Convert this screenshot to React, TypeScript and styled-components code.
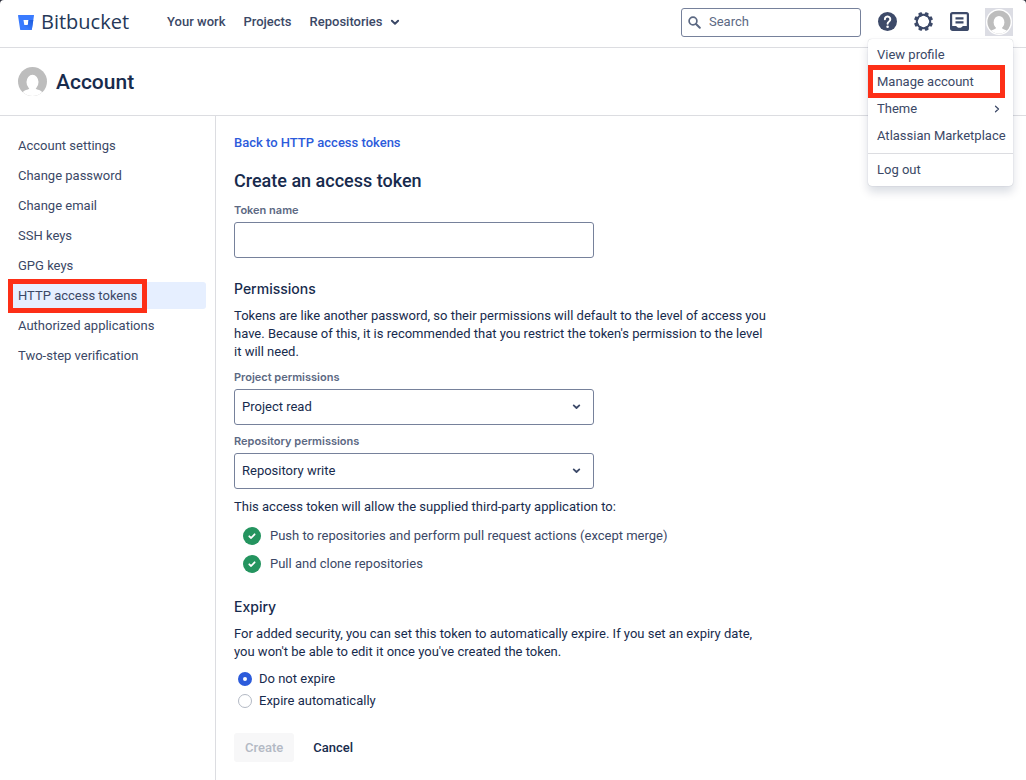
import React, { useState } from "react";
import styled, { createGlobalStyle, css } from "styled-components";

const color = {
  text: "#172b4d",
  nav: "#3b4866",
  label: "#5c6983",
  border: "#dcdde1",
  input: "#76819b",
  link: "#2c5bdb",
  icon: "#3d4a69",
  mark: "#fd2f17",
};

const GlobalStyle = createGlobalStyle`
  *, *::before, *::after { box-sizing: border-box; }
  body {
    margin: 0;
    background: #fff;
    color: ${color.text};
    font-family: Roboto, "Liberation Sans", sans-serif;
    font-size: 13px;
    line-height: 18px;
  }
  a { color: inherit; text-decoration: none; }
  button, input, select { font: inherit; color: inherit; }
`;

const Page = styled.div`
  display: flex;
  flex-direction: column;
  min-height: 100vh;
`;

const WindowTop = styled.div`
  background: #2a2c38;
`;

const TopBar = styled.header`
  display: flex;
  align-items: center;
  height: 48px;
  padding: 0 13px 3px 18px;
  background: #fff;
  border-bottom: 1px solid ${color.border};
  border-radius: 4px 4px 0 0;
`;

const Brand = styled.a`
  display: flex;
  align-items: center;
  gap: 7px;
  margin-right: 38px;
  font-family: "Open Sans", "Noto Sans", sans-serif;
  font-size: 20px;
  line-height: 24px;
  color: #253858;
`;

const MainNav = styled.nav`
  display: flex;
  align-items: center;
  gap: 18px;
  font-weight: 500;
  color: ${color.nav};
`;

const NavLink = styled.a`
  display: flex;
  align-items: center;
  gap: 7px;
`;

const SearchBox = styled.label`
  display: flex;
  align-items: center;
  gap: 8px;
  width: 180px;
  height: 29px;
  margin: 0 16px 0 auto;
  padding: 0 6px;
  border: 1px solid ${color.input};
  border-radius: 3px;
`;

const SearchInput = styled.input`
  flex: 1;
  min-width: 0;
  padding: 0;
  border: 0;
  outline: 0;
  background: none;
  &::placeholder { color: ${color.label}; opacity: 1; }
`;

const Tools = styled.div`
  display: flex;
  align-items: center;
  gap: 16px;
`;

const IconButton = styled.button`
  display: flex;
  padding: 0;
  border: 0;
  background: none;
  color: ${color.icon};
`;

const Profile = styled.div`
  position: relative;
`;

const ProfileButton = styled(IconButton)`
  align-items: center;
  justify-content: center;
  width: 28px;
  height: 28px;
  background: #dcdde4;
`;

const Menu = styled.div`
  position: absolute;
  z-index: 2;
  top: 31px;
  right: 0;
  width: 145px;
  padding: 2px 0 3px;
  background: #fff;
  border-radius: 4px;
  box-shadow: 0 0 1px rgba(9, 30, 66, 0.31), 0 6px 10px rgba(9, 30, 66, 0.15);
`;

const MenuItem = styled.a`
  position: relative;
  display: flex;
  align-items: center;
  justify-content: space-between;
  height: 27px;
  padding: 0 12px 0 9px;
  color: ${color.nav};
  white-space: nowrap;
`;

const MenuDivider = styled.hr`
  margin: 4px 0 2px;
  border: 0;
  border-top: 1px solid ${color.border};
`;

const highlight = css`
  &::after {
    content: "";
    position: absolute;
    border: 5px solid ${color.mark};
    pointer-events: none;
  }
`;

const MarkedMenuItem = styled(MenuItem)`
  ${highlight}
  &::after { inset: -3px 8px -3px 0; }
`;

const AccountBar = styled.div`
  display: flex;
  align-items: center;
  gap: 9px;
  height: 68px;
  padding: 0 18px;
  border-bottom: 1px solid ${color.border};
`;

const AccountTitle = styled.h1`
  margin: 0;
  font-size: 21px;
  line-height: 24px;
  font-weight: 500;
`;

const Body = styled.div`
  display: flex;
  flex: 1;
`;

const Sidebar = styled.nav`
  display: flex;
  flex: none;
  flex-direction: column;
  gap: 3px;
  width: 216px;
  padding: 16px 9px;
  border-right: 1px solid ${color.border};
`;

const SideLink = styled.a<{ $active?: boolean }>`
  display: flex;
  align-items: center;
  height: 27px;
  padding: 0 9px;
  border-radius: 3px;
  color: ${color.nav};
  background: ${(p) => (p.$active ? "#e6efff" : "none")};
`;

const Marked = styled.span`
  position: relative;
  ${highlight}
  &::after { inset: -8px -10px; }
`;

const Main = styled.main`
  flex: 1;
  min-width: 0;
  padding: 18px;
`;

const Form = styled.form`
  max-width: 538px;
`;

const BackLink = styled.a`
  display: block;
  font-weight: 500;
  color: ${color.link};
`;

const PageTitle = styled.h2`
  margin: 17px 0 9px;
  font-size: 18px;
  line-height: 24px;
  font-weight: 500;
`;

const SectionTitle = styled.h3<{ $top: number }>`
  margin: ${(p) => p.$top}px 0 8px;
  font-family: Inter, "Liberation Sans", sans-serif;
  font-size: 14px;
  line-height: 20px;
  font-weight: 500;
`;

const Text = styled.p`
  margin: 0;
`;

const Field = styled.div`
  display: flex;
  flex-direction: column;
  gap: 4px;
  max-width: 360px;
`;

const SelectField = styled(Field)`
  margin-top: 8px;
`;

const Label = styled.label`
  font-family: Inter, "Liberation Sans", sans-serif;
  font-size: 11px;
  line-height: 16px;
  font-weight: 600;
  color: ${color.label};
`;

const TextInput = styled.input`
  height: 36px;
  padding: 0 8px;
  background: #fff;
  border: 1px solid ${color.input};
  border-radius: 3px;
`;

const SelectWrap = styled.div`
  position: relative;
  display: grid;
  svg {
    position: absolute;
    right: 13px;
    top: 13px;
    pointer-events: none;
    color: ${color.icon};
  }
`;

const Select = styled.select`
  appearance: none;
  height: 36px;
  padding: 0 30px 0 7px;
  background: #fff;
  border: 1px solid ${color.input};
  border-radius: 3px;
`;

const GrantIntro = styled(Text)`
  margin-top: 9px;
`;

const GrantList = styled.ul`
  display: grid;
  gap: 10px;
  margin: 11px 0 0;
  padding: 0 9px;
  list-style: none;
  color: ${color.nav};
`;

const Grant = styled.li`
  display: flex;
  align-items: center;
  gap: 9px;
  height: 18px;
`;

const Choices = styled.fieldset`
  display: grid;
  gap: 4px;
  margin: 9px 0 0;
  padding: 0 4px;
  border: 0;
`;

const Choice = styled.label`
  display: flex;
  align-items: center;
  gap: 7px;
`;

const Radio = styled.input`
  appearance: none;
  width: 14px;
  height: 14px;
  margin: 0;
  border: 1px solid #b3b9c4;
  border-radius: 50%;
  background: #fff;
  &:checked { border: 5px solid ${color.link}; }
`;

const Actions = styled.div`
  display: flex;
  align-items: center;
  gap: 8px;
  margin-top: 23px;
`;

const Button = styled.button<{ $primary?: boolean }>`
  height: 29px;
  padding: 0 11px;
  border: 0;
  border-radius: 3px;
  font-weight: 500;
  background: ${(p) => (p.$primary ? "#f7f7f8" : "none")};
  &:disabled { color: #b3b9c4; }
`;

const Chevron = ({ size = 9 }: { size?: number }) => (
  <svg width={size} height={size} viewBox="0 0 9 9" fill="none" aria-hidden="true">
    <path d="M1.700 3.400 4.500 6 7.300 3.400" stroke="currentColor" strokeWidth="1.800" strokeLinecap="round" strokeLinejoin="round" />
  </svg>
);

const BucketLogo = () => (
  <svg width="16" height="15" viewBox="0 0 16 15" aria-hidden="true">
    <defs>
      <linearGradient id="bucket" x1="1" y1="0" x2="0.35" y2="0.75">
        <stop offset="0.15" stopColor="#1f5fe0" />
        <stop offset="1" stopColor="#3a7bff" />
      </linearGradient>
    </defs>
    <path d="M.5 0h15c.3 0 .6.3.5.6L13.900 14.300c-.1.4-.3.700-.7.700H2.900c-.4 0-.7-.3-.8-.7L0 .6C0 .3.200 0 .5 0ZM6.300 9.900h3.500l.8-5H5.500Z" fill="#3a7bff" fillRule="evenodd" />
    <path d="M15.300 4.900h-4.700l-.8 5H6.300l-4 4.800c.2.200.4.300.6.300h10.300c.4 0 .6-.3.7-.7Z" fill="url(#bucket)" />
  </svg>
);

const Avatar = ({ size, ring }: { size: number; ring?: boolean }) => (
  <svg width={size} height={size} viewBox="0 0 28 28" aria-hidden="true">
    <defs>
      <clipPath id={`avatar-${size}`}>
        <circle cx="14" cy="14" r={ring ? 12.5 : 14} />
      </clipPath>
    </defs>
    <circle cx="14" cy="14" r="14" fill="#fff" />
    <g clipPath={`url(#avatar-${size})`}>
      <rect width="28" height="28" fill="#bdbdbd" />
      <ellipse cx="14" cy="14.500" rx="5.800" ry="7" fill="#fff" />
      <path d="M11 19.500c0 1.500-.8 2-2.500 2.500-2.200.6-3.500 1.500-4.300 3L4 28h20l-.2-3c-.8-1.500-2.100-2.400-4.300-3-1.700-.5-2.500-1-2.500-2.500Z" fill="#fff" />
    </g>
  </svg>
);

const SearchIcon = () => (
  <svg width="13" height="13" viewBox="0 0 13 13" fill="none" stroke={color.label} aria-hidden="true">
    <circle cx="5" cy="5" r="3.900" strokeWidth="1.700" />
    <path d="m8 8 3.800 3.800" strokeWidth="2" strokeLinecap="round" />
  </svg>
);

const HelpIcon = () => (
  <svg width="20" height="20" viewBox="0 0 20 20" fill="none" aria-hidden="true">
    <circle cx="10.500" cy="9.500" r="9.500" fill="currentColor" />
    <path d="M7.900 7.300a2.700 2.700 0 1 1 4.200 2.200c-1 .7-1.500 1.100-1.500 2.200" stroke="#fff" strokeWidth="2" strokeLinecap="round" />
    <circle cx="10.600" cy="14.700" r="1.300" fill="#fff" />
  </svg>
);

const GearIcon = () => (
  <svg width="20" height="20" viewBox="0 0 20 20" aria-hidden="true">
    <g fill="currentColor">
      {[0, 45, 90, 135, 180, 225, 270, 315].map((a) => (
        <rect key={a} x="8.600" y="0" width="3.800" height="4" rx="0.900" transform={`rotate(${a + 22.5} 10.500 9.500)`} />
      ))}
    </g>
    <circle cx="10.500" cy="9.500" r="6.700" fill="none" stroke="currentColor" strokeWidth="2" />
  </svg>
);

const FeedIcon = () => (
  <svg width="20" height="20" viewBox="0 0 20 20" fill="none" stroke="currentColor" aria-hidden="true">
    <rect x="2.100" y="1.100" width="16.800" height="16.800" rx="1.500" strokeWidth="2.200" />
    <path d="M6.500 6.300h8M6.500 10.300h8" strokeWidth="2.200" />
    <path d="M2.500 14h4.800c.4 1.200 1.700 1.800 3.200 1.800s2.800-.6 3.200-1.800h4.800V18h-16Z" fill="currentColor" stroke="none" />
  </svg>
);

const CheckIcon = () => (
  <svg width="18" height="18" viewBox="0 0 18 18" fill="none" aria-hidden="true">
    <circle cx="9" cy="9" r="9" fill="#24945f" />
    <path d="m6.300 9.300 1.800 1.700 3.500-3.700" stroke="#fff" strokeWidth="1.800" strokeLinecap="round" strokeLinejoin="round" />
  </svg>
);

export default function App() {
  const [expiry, setExpiry] = useState("never");
  return (
    <Page>
      <GlobalStyle />
      <WindowTop>
        <TopBar>
          <Brand href="#"><BucketLogo />Bitbucket</Brand>
          <MainNav aria-label="Main">
            <NavLink href="#">Your work</NavLink>
            <NavLink href="#">Projects</NavLink>
            <NavLink href="#">Repositories <Chevron size={10} /></NavLink>
          </MainNav>
          <SearchBox>
            <SearchIcon />
            <SearchInput type="text" placeholder="Search" aria-label="Search" />
          </SearchBox>
          <Tools>
            <IconButton type="button" aria-label="Help"><HelpIcon /></IconButton>
            <IconButton type="button" aria-label="Settings"><GearIcon /></IconButton>
            <IconButton type="button" aria-label="Inbox"><FeedIcon /></IconButton>
            <Profile>
              <ProfileButton type="button" aria-label="Profile"><Avatar size={26} ring /></ProfileButton>
              <Menu>
                <MenuItem href="#">View profile</MenuItem>
                <MarkedMenuItem href="#">Manage account</MarkedMenuItem>
                <MenuItem href="#">
                  Theme
                  <svg width="8" height="8" viewBox="0 0 8 8" fill="none" aria-hidden="true">
                    <path d="M2.500 1.200 5.500 4 2.500 6.800" stroke="currentColor" strokeWidth="1.200" strokeLinecap="round" strokeLinejoin="round" />
                  </svg>
                </MenuItem>
                <MenuItem href="#">Atlassian Marketplace</MenuItem>
                <MenuDivider />
                <MenuItem href="#">Log out</MenuItem>
              </Menu>
            </Profile>
          </Tools>
        </TopBar>
      </WindowTop>

      <AccountBar>
        <Avatar size={29} />
        <AccountTitle>Account</AccountTitle>
      </AccountBar>

      <Body>
        <Sidebar aria-label="Account">
          <SideLink href="#">Account settings</SideLink>
          <SideLink href="#">Change password</SideLink>
          <SideLink href="#">Change email</SideLink>
          <SideLink href="#">SSH keys</SideLink>
          <SideLink href="#">GPG keys</SideLink>
          <SideLink href="#" $active><Marked>HTTP access tokens</Marked></SideLink>
          <SideLink href="#">Authorized applications</SideLink>
          <SideLink href="#">Two-step verification</SideLink>
        </Sidebar>

        <Main>
          <Form onSubmit={(e) => e.preventDefault()}>
            <BackLink href="#">Back to HTTP access tokens</BackLink>
            <PageTitle>Create an access token</PageTitle>
            <Field>
              <Label htmlFor="token-name">Token name</Label>
              <TextInput id="token-name" type="text" />
            </Field>

            <SectionTitle $top={21}>Permissions</SectionTitle>
            <Text>
              Tokens are like another password, so their permissions will default to the level of access you
              have. Because of this, it is recommended that you restrict the token's permission to the level
              it will need.
            </Text>
            <SelectField>
              <Label htmlFor="project">Project permissions</Label>
              <SelectWrap>
                <Select id="project"><option>Project read</option></Select>
                <Chevron />
              </SelectWrap>
            </SelectField>
            <SelectField>
              <Label htmlFor="repository">Repository permissions</Label>
              <SelectWrap>
                <Select id="repository"><option>Repository write</option></Select>
                <Chevron />
              </SelectWrap>
            </SelectField>
            <GrantIntro>This access token will allow the supplied third-party application to:</GrantIntro>
            <GrantList>
              <Grant><CheckIcon />Push to repositories and perform pull request actions (except merge)</Grant>
              <Grant><CheckIcon />Pull and clone repositories</Grant>
            </GrantList>

            <SectionTitle $top={24}>Expiry</SectionTitle>
            <Text>
              For added security, you can set this token to automatically expire. If you set an expiry date,
              you won't be able to edit it once you've created the token.
            </Text>
            <Choices aria-label="Expiry">
              <Choice>
                <Radio type="radio" name="expiry" checked={expiry === "never"} onChange={() => setExpiry("never")} />
                Do not expire
              </Choice>
              <Choice>
                <Radio type="radio" name="expiry" checked={expiry === "auto"} onChange={() => setExpiry("auto")} />
                Expire automatically
              </Choice>
            </Choices>
            <Actions>
              <Button type="submit" $primary disabled>Create</Button>
              <Button type="button">Cancel</Button>
            </Actions>
          </Form>
        </Main>
      </Body>
    </Page>
  );
}
